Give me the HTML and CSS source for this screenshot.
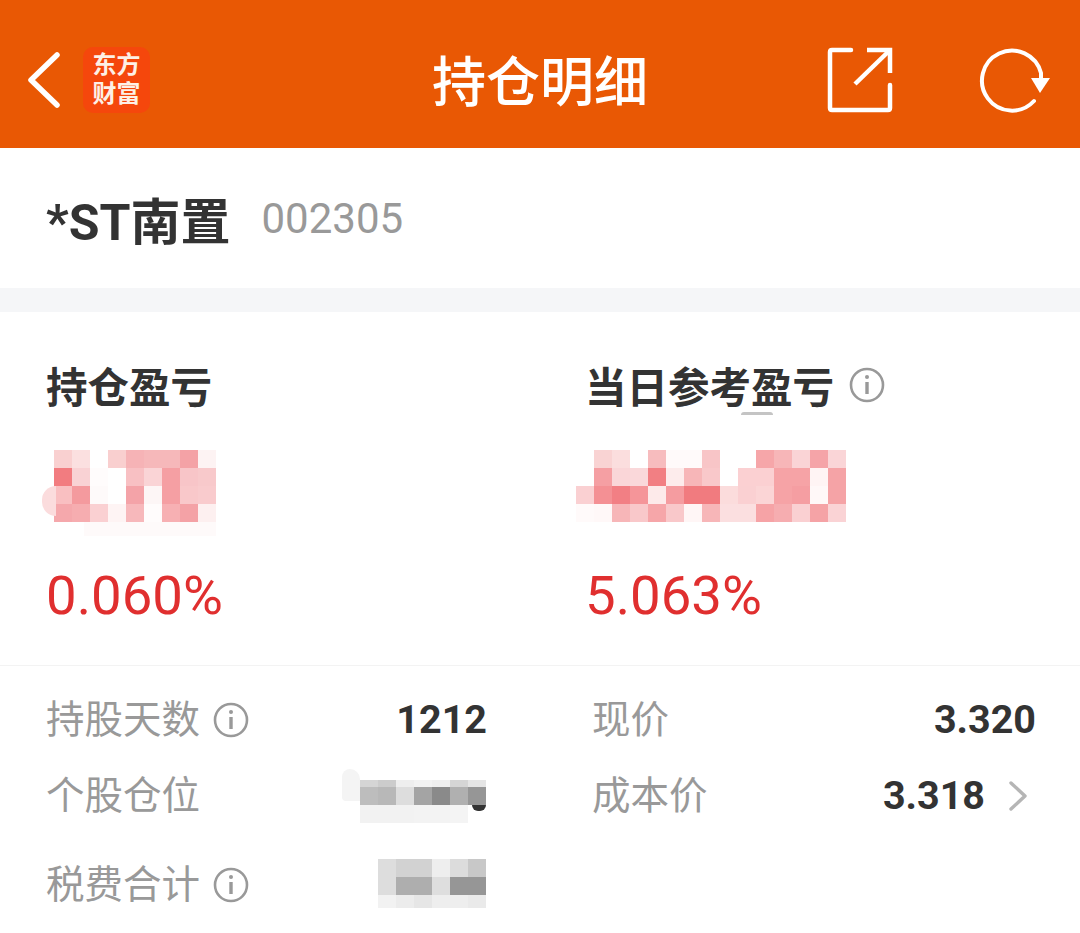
FILE: index.html
```html
<!DOCTYPE html>
<html lang="zh-CN">
<head>
    <meta charset="UTF-8">
    <meta name="viewport" content="width=device-width, initial-scale=1.0">
    <title>持仓明细</title>
    <link rel="stylesheet" href="styles.css">
</head>
<body>
    <header class="topbar">
        <div class="topbar-left">
            <svg class="back-icon" width="36" height="56" viewBox="0 0 36 56" fill="none" stroke="#fff" stroke-width="5.5" stroke-linecap="round" stroke-linejoin="round">
                <path d="M30 3 L4 28 L30 53"/>
            </svg>
            <div class="logo">东方<br>财富</div>
        </div>
        <h1 class="title">持仓明细</h1>
        <div class="topbar-right">
            <svg width="66" height="66" viewBox="0 0 66 66" fill="none" stroke="#fff" stroke-width="4.5" stroke-linecap="round" stroke-linejoin="round">
                <path d="M24 3 H5 Q3 3 3 5 V61 Q3 63 5 63 H61 Q63 63 63 61 V38"/>
                <path d="M40 3 H63 V26" stroke-linecap="butt" stroke-linejoin="miter"/>
                <path d="M28 37 L62 4" stroke-linecap="butt"/>
            </svg>
            <svg width="74" height="66" viewBox="0 0 74 66" fill="none">
                <path d="M55 54 A30 30 0 1 1 62 26 V34" stroke="#fff" stroke-width="4" stroke-linecap="round"/>
                <path d="M52 31 H71 L61 46 Z" fill="#fff"/>
            </svg>
        </div>
    </header>

    <section class="stock">
        <span class="stock-name">*ST南置</span>
        <span class="stock-code">002305</span>
    </section>

    <section class="profit">
        <div class="profit-col">
            <div class="profit-label">持仓盈亏</div>
            <div class="mosaic mosaic-a" data-mosaic="a"></div>
            <div class="profit-pct">0.060%</div>
        </div>
        <div class="profit-col">
            <div class="profit-label">当日参考盈亏
                <svg class="info-icon" width="36" height="36" viewBox="0 0 36 36" fill="none" stroke="#999" stroke-width="2.6">
                    <circle cx="18" cy="18" r="16"/>
                    <path d="M18 15 V27" stroke-width="3.4"/>
                    <circle cx="18" cy="10" r="2" fill="#999" stroke="none"/>
                </svg>
            </div>
            <div class="mosaic mosaic-b" data-mosaic="b"></div>
            <div class="profit-pct">5.063%</div>
        </div>
    </section>

    <section class="details">
        <div class="detail-row row-first">
            <div class="detail">
                <span class="detail-label">持股天数
                    <svg class="info-icon" width="36" height="36" viewBox="0 0 36 36" fill="none" stroke="#999" stroke-width="2.6">
                        <circle cx="18" cy="18" r="16"/>
                        <path d="M18 15 V27" stroke-width="3.4"/>
                        <circle cx="18" cy="10" r="2" fill="#999" stroke="none"/>
                    </svg>
                </span>
                <span class="detail-value">1212</span>
            </div>
            <div class="detail detail-right">
                <span class="detail-label">现价</span>
                <span class="detail-value">3.320</span>
            </div>
        </div>
        <div class="detail-row row-second">
            <div class="detail">
                <span class="detail-label">个股仓位</span>
                <div class="mosaic mosaic-c" data-mosaic="c"></div>
            </div>
            <div class="detail detail-right">
                <span class="detail-label">成本价</span>
                <span class="detail-value">3.318
                    <svg class="chevron" width="20" height="30" viewBox="0 0 20 30" fill="none" stroke="#b5b5b5" stroke-width="3.4" stroke-linecap="round" stroke-linejoin="round">
                        <path d="M3 2 L17 15 L3 28"/>
                    </svg>
                </span>
            </div>
        </div>
        <div class="detail-row row-third">
            <div class="detail">
                <span class="detail-label">税费合计
                    <svg class="info-icon" width="36" height="36" viewBox="0 0 36 36" fill="none" stroke="#999" stroke-width="2.6">
                        <circle cx="18" cy="18" r="16"/>
                        <path d="M18 15 V27" stroke-width="3.4"/>
                        <circle cx="18" cy="10" r="2" fill="#999" stroke="none"/>
                    </svg>
                </span>
                <div class="mosaic mosaic-d" data-mosaic="d"></div>
            </div>
            <div class="detail detail-right"></div>
        </div>
    </section>

    <script src="mosaic.js"></script>
</body>
</html>
```

FILE: styles.css
```css
* {
    box-sizing: border-box;
}
html, body {
    margin: 0;
    background: #fff;
}
body {
    font-family: Roboto, "Noto Sans CJK SC", sans-serif;
    color: #333;
    overflow: hidden;
}
.topbar {
    position: relative;
    height: 148px;
    background: #e95804;
    display: flex;
    align-items: center;
    justify-content: space-between;
    padding: 12px 27px 0 27px;
}
.topbar-left {
    display: flex;
    align-items: center;
    gap: 20px;
}
.logo {
    width: 67px;
    height: 66px;
    border-radius: 10px;
    background: #f5470c;
    color: #fdf0e6;
    font-size: 24px;
    line-height: 29px;
    font-weight: 700;
    text-align: center;
    padding-top: 4px;
}
.title {
    position: absolute;
    left: 0;
    right: 0;
    top: 52px;
    margin: 0;
    text-align: center;
    color: #fff;
    font-size: 54px;
    line-height: 64px;
    font-weight: 500;
}
.topbar-right {
    display: flex;
    align-items: center;
    gap: 86px;
}
.stock {
    height: 164px;
    padding: 0 46px;
    border-bottom: 24px solid #f5f6f8;
    display: flex;
    align-items: center;
    gap: 31px;
}
.stock-name {
    font-size: 50px;
    font-weight: 700;
    color: #333;
}
.stock-code {
    font-size: 42px;
    color: #999;
}
.profit {
    height: 354px;
    display: grid;
    grid-template-columns: 539px 1fr;
    padding: 48px 0 0 46px;
    border-bottom: 1px solid #f3f3f3;
}
.profit-label {
    display: flex;
    align-items: center;
    gap: 15px;
    height: 50px;
    font-size: 41.5px;
    font-weight: 700;
    color: #333;
}
.profit-pct {
    margin-top: 43px;
    font-size: 54.5px;
    line-height: 60px;
    color: #e02f2f;
}
.mosaic {
    position: relative;
    display: grid;
    grid-auto-rows: 18px;
    grid-template-columns: repeat(var(--cols), 18px);
}
.mosaic-a {
    width: 162px;
    margin: 40px 0 0 8px;
    --cols: 9;
}
/* left edge of the smudge on the first block */
.mosaic-a::before {
    content: "";
    position: absolute;
    left: -12px;
    top: 36px;
    width: 14px;
    height: 30px;
    border-radius: 14px 0 0 14px;
    background: #fbdcdd;
}
/* fainter band under the blocks */
.mosaic-a::after {
    content: "";
    position: absolute;
    left: 30px;
    right: 0;
    top: 72px;
    height: 14px;
    background: #fefafa;
}
.mosaic-b {
    width: 270px;
    margin: 40px 0 0 -9px;
    --cols: 15;
}
/* bit of a letter left showing above the smudge */
.mosaic-b::before {
    content: "";
    position: absolute;
    left: 165px;
    top: -38px;
    width: 32px;
    height: 3px;
    border-radius: 3px 3px 0 0;
    background: #c4c4c4;
}
.mosaic-c {
    align-self: flex-start;
    margin: 6px 1px -5px 0;
    grid-template-rows: 7px 18px 18px;
    --cols: 7;
}
/* smudge running out to the left of the blocks */
.mosaic-c::before {
    content: "";
    position: absolute;
    left: -18px;
    top: -11px;
    width: 18px;
    height: 32px;
    border-radius: 8px 10px 0 4px;
    background: #f4f4f4;
}
/* bottom of the digit the blur missed */
.mosaic-c::after {
    content: "";
    position: absolute;
    right: 0;
    top: 25px;
    width: 14px;
    height: 6px;
    border-radius: 0 0 7px 7px;
    background: #333;
}
.mosaic-d {
    margin: -3px 1px 0 0;
    grid-template-rows: 18px 18px 13px;
    --cols: 6;
}
.details {
    padding: 0 44px 0 46px;
}
.detail-row {
    display: grid;
    grid-template-columns: 441px 444px;
    column-gap: 105px;
    align-items: center;
}
.row-first {
    height: 108px;
}
.row-second {
    height: 44px;
}
.row-third {
    height: 134px;
}
.detail {
    display: flex;
    align-items: center;
    justify-content: space-between;
}
.detail-label {
    display: flex;
    align-items: center;
    gap: 13px;
    font-size: 38.5px;
    line-height: 44px;
    color: #999;
}
.detail-value {
    display: flex;
    align-items: center;
    gap: 23px;
    font-size: 39.5px;
    line-height: 44px;
    font-weight: 700;
    color: #333;
}
.chevron {
    margin-right: 8px;
}
```

FILE: mosaic.js
```js
// pixelated blocks that hide the amounts, colours read off the picture
const mosaics = {
    a: [
        'f9d0d0', 'fbe0e0', 'ffffff', 'f9cfcf', 'f6b3b6', 'f6b8ba', 'f6b8ba', 'f4a2a6', 'fdf3f3',
        'f27c80', 'f9d2d4', 'fffcfc', 'ffffff', 'f8c0c3', 'fad4d6', 'f59fa3', 'f8c5c8', 'f8c9cb',
        'f9bfc1', 'f49a9e', 'fefafa', 'ffffff', 'f4a3a8', 'fdf6f6', 'f59fa3', 'f9c8ca', 'f9cbcd',
        'f5a8ac', 'f6adb0', 'fad0d2', 'fef4f4', 'f7b8bb', 'fffcfc', 'f7b0b3', 'f4a2a6', 'fdf0f0'
    ],
    b: [
        'ffffff', 'f9d3d3', 'fbdede', 'ffffff', 'f7bcbe', 'fffafa', 'fffafa', 'f8c5c7', 'ffffff', 'ffffff', 'f6a6a9', 'f7b6b8', 'fad4d6', 'f5a4a8', 'fad5d7',
        'ffffff', 'f59fa3', 'fad6d8', 'fad8da', 'f27f83', 'fdecec', 'f7b6b8', 'f9c8ca', 'ffffff', 'fbd0d2', 'fbd0d2', 'f6a3a6', 'f6a3a6', 'fff4f4', 'f5a3a6',
        'fad0d2', 'f49094', 'f27f84', 'f59599', 'fdeaea', 'f59ca0', 'f17b7f', 'f17b7f', 'fbdcdc', 'fad0d2', 'fbd5d6', 'f6a3a6', 'f59ea2', 'fff8f8', 'f5a3a6',
        'fffafa', 'fff8f8', 'f7b6b8', 'f9c8ca', 'f6a6a9', 'f9c8ca', 'fff6f6', 'f7b6b8', 'fbdfe0', 'fbdfe0', 'f6a3a6', 'f6adb0', 'fad0d2', 'f5a3a6', 'fad3d5'
    ],
    c: [
        'd5d5d5', 'cccccc', 'eeeeee', 'f2f2f2', 'eeeeee', 'd5d5d5', 'e5e5e5',
        'bdbdbd', 'b8b8b8', 'dddddd', 'a4a4a4', '8a8a8a', 'b0b0b0', '969696',
        'f2f2f2', 'f2f2f2', 'f2f2f2', 'f3f3f3', 'f3f3f3', 'f4f4f4', 'ffffff'
    ],
    d: [
        'dddddd', 'd2d2d2', 'd2d2d2', 'eeeeee', 'dcdcdc', 'c8c8c8',
        'dddddd', 'aeaeae', 'aeaeae', 'dedede', '969696', '969696',
        'f2f2f2', 'ececec', 'e6e6e6', 'eeeeee', 'eeeeee', 'eaeaea'
    ]
};

document.querySelectorAll('[data-mosaic]').forEach((box) => {
    mosaics[box.dataset.mosaic].forEach((colour) => {
        const cell = document.createElement('span');
        cell.style.background = '#' + colour;
        box.appendChild(cell);
    });
});
```
